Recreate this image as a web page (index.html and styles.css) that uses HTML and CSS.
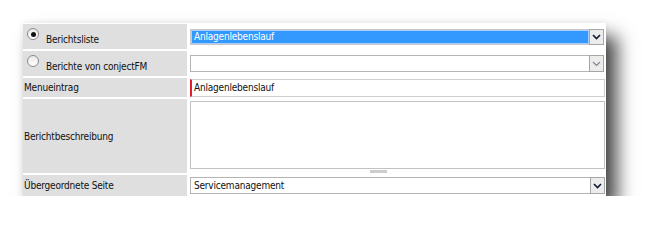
FILE: index.html
```html
<!DOCTYPE html>
<html>
<head>
  <title>Bericht bearbeiten</title>
  <link rel="stylesheet" href="styles.css">
</head>
<body>
  <div class="panel">
    <div class="label radio-label row1">
      <span class="radio checked"></span>
      <span class="radio-text">Berichtsliste</span>
    </div>
    <div class="value row1">
      <div class="select active">
        <span class="select-text">Anlagenlebenslauf</span>
        <span class="arrow">
          <svg width="9" height="6" viewBox="0 0 9 6"><path d="M1 1 L4.5 4.5 L8 1" fill="none" stroke="#111a33" stroke-width="1.6"/></svg>
        </span>
      </div>
    </div>

    <div class="label radio-label row2">
      <span class="radio"></span>
      <span class="radio-text">Berichte von conjectFM</span>
    </div>
    <div class="value row2">
      <div class="select">
        <span class="select-text"></span>
        <span class="arrow disabled">
          <svg width="9" height="6" viewBox="0 0 9 6"><path d="M1 1 L4.5 4.5 L8 1" fill="none" stroke="#7f8797" stroke-width="1.2"/></svg>
        </span>
      </div>
    </div>

    <div class="label row3">Menueintrag</div>
    <div class="value row3">
      <div class="text-input required">Anlagenlebenslauf</div>
    </div>

    <div class="label row4">Berichtbeschreibung</div>
    <div class="value row4">
      <div class="textarea"></div>
      <div class="grip"></div>
    </div>

    <div class="label row5">Übergeordnete Seite</div>
    <div class="value row5">
      <div class="select">
        <span class="select-text">Servicemanagement</span>
        <span class="arrow">
          <svg width="9" height="6" viewBox="0 0 9 6"><path d="M1 1 L4.5 4.5 L8 1" fill="none" stroke="#111a33" stroke-width="1.6"/></svg>
        </span>
      </div>
    </div>
  </div>
</body>
</html>
```
FILE: styles.css
```css
/* form panel with drop shadow */
body {
  margin: 0;
  padding: 23px 0 0 23px;
  background: #fff;
  font-family: "DejaVu Sans Condensed", "DejaVu Sans", sans-serif;
  font-size: 10px;
  letter-spacing: -0.2px;
  color: #111;
}
.panel {
  width: 583px;
  background: #fff;
  padding-top: 1px;
  display: grid;
  grid-template-columns: 164px 1fr;
  grid-template-rows: 25px 25px 19px 74px 21px;
  row-gap: 2px;
  column-gap: 2px;
  box-shadow: 11px 13px 17px rgba(0, 0, 0, 0.72), 0 0 6px rgba(0, 0, 0, 0.08);
}
.label {
  background: #dfdfdf;
  display: flex;
  align-items: center;
  padding-left: 1px;
}
.radio-label {
  align-items: flex-start;
  padding-left: 4px;
}
.radio {
  width: 12px;
  height: 12px;
  border: 1px solid #8a8a8a;
  border-radius: 50%;
  background: linear-gradient(#e8e8e8, #fff);
  margin-top: 4px;
  box-sizing: border-box;
  position: relative;
}
.radio.checked::after {
  content: "";
  position: absolute;
  left: 2.5px;
  top: 2.5px;
  width: 5px;
  height: 5px;
  border-radius: 50%;
  background: #111;
}
.radio-text {
  margin-left: 7px;
  margin-top: 10px;
}
.value {
  padding-left: 1px;
  padding-right: 1px;
}
.row1.value { padding-top: 5px; padding-right: 2px; }
.row2.value { padding-top: 4px; padding-right: 2px; }
.row3.value { padding-top: 1px; }
.row4.value { padding-top: 2px; }
.row5.value { padding-top: 2px; }

.select {
  display: flex;
  height: 17px;
  border: 1px solid #b4b4b4;
  box-sizing: border-box;
  background: #fff;
}
.select-text {
  flex: 1;
  padding-left: 3px;
  line-height: 15px;
}
.select.active {
  height: 16px;
  border-color: #c9c9c9;
}
.select.active .select-text {
  background: #3399ff;
  color: #fff;
  border: 1px solid #a8d0fb;
  line-height: 12px;
  padding-left: 2px;
}
.arrow {
  width: 15px;
  background: #ececec;
  border: 1px solid #a6a6a6;
  box-sizing: border-box;
  display: flex;
  align-items: center;
  justify-content: center;
  margin: -1px -1px -1px 1px;
}
.select.active .arrow {
  margin-left: 0;
}
.text-input {
  height: 18px;
  border: 1px solid #cfcfcf;
  border-left: 2px solid #e0202a;
  box-sizing: border-box;
  padding-left: 2px;
  line-height: 16px;
}
.textarea {
  height: 68px;
  border: 1px solid #c2c2c2;
  box-sizing: border-box;
}
.grip {
  width: 17px;
  height: 3px;
  background: #cdcdcd;
  margin: 1px 0 0 180px;
}
```
